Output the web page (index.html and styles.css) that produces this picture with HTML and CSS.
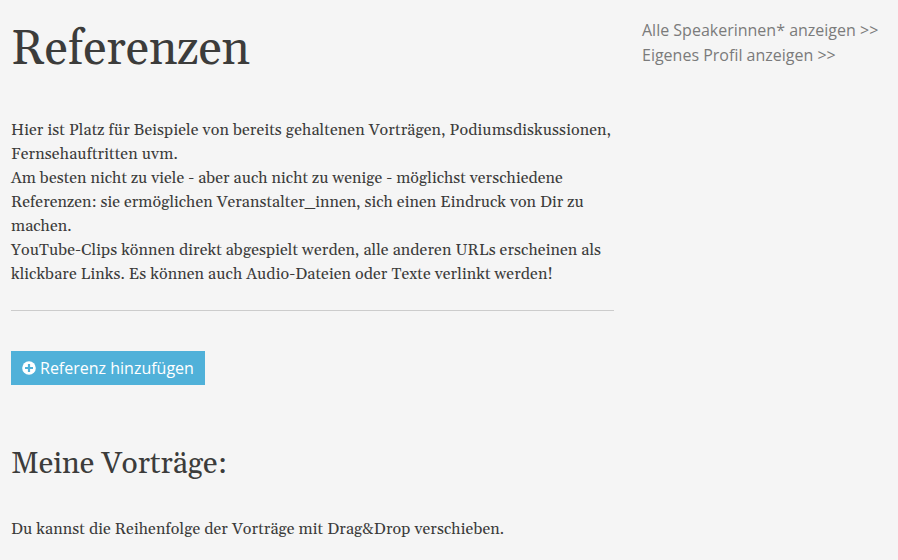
FILE: index.html
```html
<!DOCTYPE html>
<html lang="de">
<head>
<meta charset="utf-8">
<title>Referenzen</title>
<link rel="stylesheet" href="styles.css">
</head>
<body>
<div class="page">
  <main class="content">
    <h1 class="title">Referenzen</h1>
    <p class="intro">
      Hier ist Platz für Beispiele von bereits gehaltenen Vorträgen, Podiumsdiskussionen,<br>
      Fernsehauftritten uvm.<br>
      <span class="tight">Am besten nicht zu viele - aber auch nicht zu wenige - möglichst verschiedene<br>
      Referenzen: sie ermöglichen Veranstalter_innen, sich einen Eindruck von Dir zu<br>
      machen.</span><br>
      <span class="snug">YouTube-Clips können direkt abgespielt werden, alle anderen URLs erscheinen als<br>
      klickbare Links. Es können auch Audio-Dateien oder Texte verlinkt werden!</span>
    </p>
    <hr class="rule">
    <a class="button"><svg class="icon" viewBox="0 0 14 14"><circle cx="7" cy="7" r="6.8" fill="#fff"/><path d="M7 3v8M3 7h8" stroke="#50b1d9" stroke-width="2.2"/></svg><span>Referenz hinzufügen</span></a>
    <h2 class="subtitle">Meine Vorträge:</h2>
    <p class="hint">Du kannst die Reihenfolge der Vorträge mit Drag&amp;Drop verschieben.</p>
  </main>
  <nav class="links">
    <a>Alle Speakerinnen* anzeigen &gt;&gt;</a>
    <a>Eigenes Profil anzeigen &gt;&gt;</a>
  </nav>
</div>
</body>
</html>
```
FILE: styles.css
```css
* { box-sizing: border-box; }
body { margin: 0; background: #f5f5f5; color: #3c3c3b; font: 16px/24px Georgia, Gelasio, "Liberation Serif", serif; }
.page { display: flex; gap: 28px; height: 560px; padding-left: 11px; overflow: hidden; }
.content { width: 603px; flex: none; }
.title { margin: 22px 0 0; font-size: 48px; line-height: 55px; font-weight: 400; letter-spacing: -0.1px; }
.intro { margin: 41px 0 0; white-space: nowrap; letter-spacing: 0.12px; }
.tight { letter-spacing: 0.06px; }
.snug { letter-spacing: 0.09px; }
.rule { margin: 24px 0 40px; border: 0; border-top: 1px solid #ccc; }
.button { display: flex; align-items: center; gap: 4px; width: 194px; height: 34px; padding: 0 11px; background: #50b1d9; color: #fff; font: 16px/24px "Open Sans", sans-serif; white-space: nowrap; }
.icon { width: 14px; height: 14px; flex: none; }
.subtitle { margin: 63px 0 0; font-size: 30px; line-height: 33px; font-weight: 400; }
.hint { margin: 36px 0 0; white-space: nowrap; letter-spacing: 0.1px; }
.links { display: flex; flex-direction: column; padding-top: 18px; color: #7b7b7b; font: 16px/25px "Open Sans", sans-serif; white-space: nowrap; }
```
